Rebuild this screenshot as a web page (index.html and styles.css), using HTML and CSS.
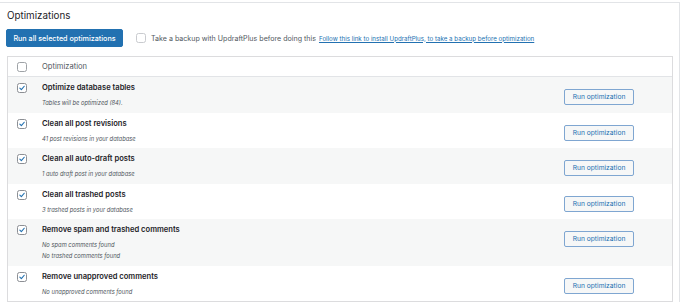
FILE: index.html
```html
<!DOCTYPE html>
<html>
<head>
<meta charset="utf-8">
<link rel="stylesheet" href="styles.css">
</head>
<body>
<div class="box">
  <h2 class="title">Optimizations</h2>
  <div class="toolbar">
    <button class="btn-primary">Run all selected optimizations</button>
    <span class="cb"></span>
    <span class="backup-text">Take a backup with UpdraftPlus before doing this</span>
    <a class="backup-link" href="#">Follow this link to install UpdraftPlus, to take a backup before optimization</a>
  </div>
  <div class="table">
    <div class="thead">
      <div class="cell-cb"><span class="cb"></span></div>
      <div class="head-label">Optimization</div>
    </div>
    <div class="row alt">
      <div class="cell-cb"><span class="cb checked"><svg viewBox="0 0 10 10"><path d="M2.3 5.2 L4.2 7.1 L7.8 2.8"/></svg></span></div>
      <div class="content">
        <div class="name">Optimize database tables</div>
        <div class="desc">Tables will be optimized (84).</div>
      </div>
      <div class="action"><button class="btn-secondary">Run optimization</button></div>
    </div>
    <div class="row">
      <div class="cell-cb"><span class="cb checked"><svg viewBox="0 0 10 10"><path d="M2.3 5.2 L4.2 7.1 L7.8 2.8"/></svg></span></div>
      <div class="content">
        <div class="name">Clean all post revisions</div>
        <div class="desc">41 post revisions in your database</div>
      </div>
      <div class="action"><button class="btn-secondary">Run optimization</button></div>
    </div>
    <div class="row alt">
      <div class="cell-cb"><span class="cb checked"><svg viewBox="0 0 10 10"><path d="M2.3 5.2 L4.2 7.1 L7.8 2.8"/></svg></span></div>
      <div class="content">
        <div class="name">Clean all auto-draft posts</div>
        <div class="desc">1 auto draft post in your database</div>
      </div>
      <div class="action"><button class="btn-secondary">Run optimization</button></div>
    </div>
    <div class="row">
      <div class="cell-cb"><span class="cb checked"><svg viewBox="0 0 10 10"><path d="M2.3 5.2 L4.2 7.1 L7.8 2.8"/></svg></span></div>
      <div class="content">
        <div class="name">Clean all trashed posts</div>
        <div class="desc">3 trashed posts in your database</div>
      </div>
      <div class="action"><button class="btn-secondary">Run optimization</button></div>
    </div>
    <div class="row alt">
      <div class="cell-cb"><span class="cb checked"><svg viewBox="0 0 10 10"><path d="M2.3 5.2 L4.2 7.1 L7.8 2.8"/></svg></span></div>
      <div class="content">
        <div class="name">Remove spam and trashed comments</div>
        <div class="desc">No spam comments found</div>
        <div class="desc">No trashed comments found</div>
      </div>
      <div class="action"><button class="btn-secondary">Run optimization</button></div>
    </div>
    <div class="row">
      <div class="cell-cb"><span class="cb checked"><svg viewBox="0 0 10 10"><path d="M2.3 5.2 L4.2 7.1 L7.8 2.8"/></svg></span></div>
      <div class="content">
        <div class="name">Remove unapproved comments</div>
        <div class="desc">No unapproved comments found</div>
      </div>
      <div class="action"><button class="btn-secondary">Run optimization</button></div>
    </div>
  </div>
</div>
</body>
</html>
```

FILE: styles.css
```css
* { box-sizing: border-box; }
html, body { margin: 0; padding: 0; background: #fff; }
body {
  font-family: Inter, "Liberation Sans", sans-serif;
  color: #1d2327;
  overflow: hidden;
  height: 302px;
}
.box {
  width: 681px;
  margin: 2px 0 0 -1px;
  border: 1px solid #e2e4e7;
  border-bottom: 0;
  padding: 0 6px 0 7px;
}
.title {
  margin: 0;
  padding-top: 6px;
  font-size: 9.8px;
  line-height: 14px;
  font-weight: 400;
  color: #1d2327;
}
.toolbar {
  display: flex;
  align-items: center;
  margin-top: 6px;
  height: 18px;
}
.btn-primary {
  font-family: inherit;
  background: #2271b1;
  color: #fff;
  border: 1px solid #2271b1;
  border-radius: 2px;
  height: 18px;
  width: 117px;
  padding: 0;
  font-size: 7.2px;
  font-weight: 500;
  margin-left: -1px;
}
.toolbar .cb { margin-left: 13px; border-color: #c9cbcf; }
.backup-text {
  margin-left: 5px;
  font-size: 7.1px;
  color: #50575e;
}
.backup-link {
  margin-left: 3px;
  font-size: 6.2px;
  color: #2271b1;
  text-decoration: underline;
}
.cb {
  display: inline-block;
  width: 10px;
  height: 10px;
  border: 1px solid #8c8f94;
  border-radius: 2.5px;
  background: #fff;
}
.cb svg {
  display: block;
  width: 8px;
  height: 8px;
}
.cb svg path {
  fill: none;
  stroke: #2271b1;
  stroke-width: 1.4;
  stroke-linecap: round;
  stroke-linejoin: round;
}
.table {
  margin-top: 9px;
  border: 1px solid #dcdcde;
  width: 666px;
}
.thead {
  display: flex;
  align-items: center;
  height: 20px;
  border-bottom: 1px solid #e2e4e7;
}
.cell-cb {
  width: 34px;
  padding-left: 9px;
  display: flex;
}
.thead .cb { border-color: #9ea2a6; }
.head-label {
  font-size: 7.6px;
  color: #50575e;
}
.row {
  display: flex;
  padding: 6px 0 4px 0;
}
.row.alt { background: #f6f7f7; }
.content { flex: 1; }
.name {
  font-size: 7.6px;
  font-weight: 600;
  line-height: 10px;
  color: #1d2327;
  margin-bottom: 5px;
}
.desc {
  font-size: 5.8px;
  font-style: italic;
  line-height: 10.6px;
  color: #50575e;
}
.action {
  width: 108px;
}
.btn-secondary {
  font-family: inherit;
  width: 70px;
  height: 16px;
  padding: 0;
  background: #f6f7f7;
  color: #2271b1;
  border: 1px solid #7fa6d1;
  border-radius: 2px;
  font-size: 6.7px;
}
```
